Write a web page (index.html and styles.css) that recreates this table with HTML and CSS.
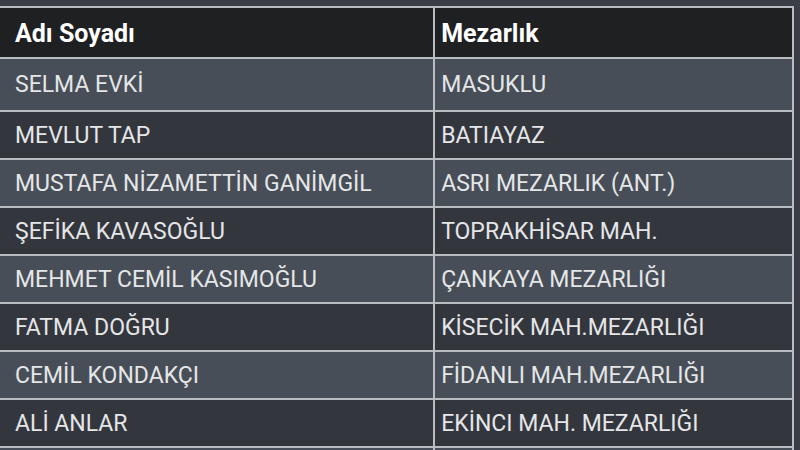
FILE: index.html
```html
<!DOCTYPE html>
<html lang="tr">
<head>
<meta charset="utf-8">
<link rel="stylesheet" href="styles.css">
</head>
<body>
<table class="grid">
  <thead>
    <tr><th class="c1">Adı Soyadı</th><th class="c2">Mezarlık</th></tr>
  </thead>
  <tbody>
    <tr class="light"><td>SELMA EVKİ</td><td>MASUKLU</td></tr>
    <tr class="dark"><td>MEVLUT TAP</td><td>BATIAYAZ</td></tr>
    <tr class="light"><td>MUSTAFA NİZAMETTİN GANİMGİL</td><td>ASRI MEZARLIK (ANT.)</td></tr>
    <tr class="dark"><td>ŞEFİKA KAVASOĞLU</td><td>TOPRAKHİSAR MAH.</td></tr>
    <tr class="light"><td>MEHMET CEMİL KASIMOĞLU</td><td>ÇANKAYA MEZARLIĞI</td></tr>
    <tr class="dark"><td>FATMA DOĞRU</td><td>KİSECİK MAH.MEZARLIĞI</td></tr>
    <tr class="light"><td>CEMİL KONDAKÇI</td><td>FİDANLI MAH.MEZARLIĞI</td></tr>
    <tr class="dark"><td>ALİ ANLAR</td><td>EKİNCI MAH. MEZARLIĞI</td></tr>
    <tr class="light"><td>&nbsp;</td><td>&nbsp;</td></tr>
  </tbody>
</table>
</body>
</html>
```
FILE: styles.css
```css
html, body {
  margin: 0;
  padding: 0;
  height: 100%;
  overflow: hidden;
  background: #3b3e46;
  font-family: Roboto, "Noto Sans", sans-serif;
}
.grid {
  border-collapse: collapse;
  margin-top: 6px;
  margin-left: -4px;
  table-layout: fixed;
  width: 798px;
}
.grid th, .grid td {
  border: 2px solid #b9bdc2;
  text-align: left;
  padding: 0 0 0 6px;
  white-space: nowrap;
  overflow: hidden;
}
.grid th:first-child, .grid td:first-child {
  border-left: none;
  padding-left: 19px;
}
.c1 { width: 411px; }
.c2 { width: 345px; }
.grid th {
  background: #1f2022;
  color: #ffffff;
  font-size: 25px;
  font-weight: 700;
  height: 48px;
  padding-top: 1px;
}
.grid td {
  color: #e4e6e8;
  font-size: 23px;
  height: 46px;
}
.grid tbody tr:first-child td { height: 51px; }
.light td { background: #484e57; }
.dark td { background: #34363e; }
```
